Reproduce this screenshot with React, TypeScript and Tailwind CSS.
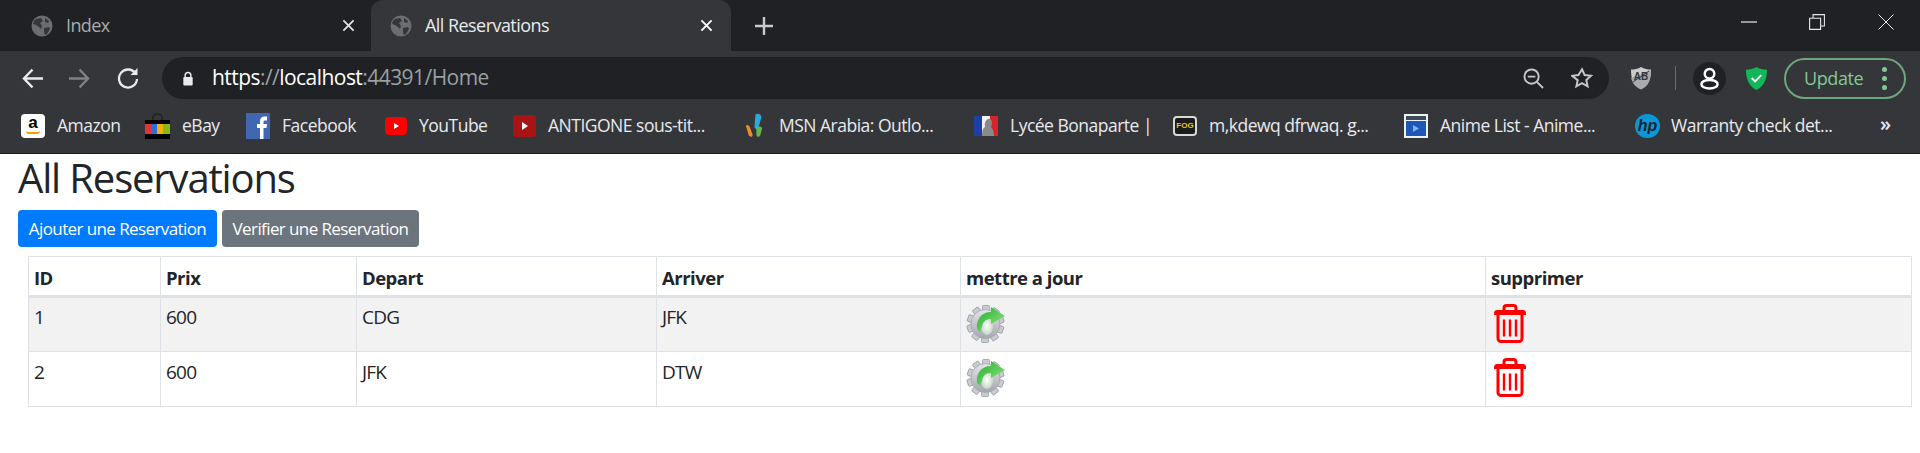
import React from "react";

const FONT = "font-['Open_Sans','Noto_Sans',sans-serif]";

function Globe({ cls }: { cls: string }) {
  return (
    <svg viewBox="0 0 22 22" className={cls}>
      <circle cx="11" cy="11" r="10.5" fill="#6b6d71" />
      <path d="M5 4l5-1 2 3-3 2 2 3-1 3-2-2-3-2-3-1 1-3zM13 13l5-1 1 2-3 5-2 1-1-3zM14 3l4 3-1 2-3-1z" fill="#35363a" />
    </svg>
  );
}

function X({ cls }: { cls: string }) {
  return (
    <svg viewBox="0 0 14 14" className={cls} fill="none" stroke="currentColor" strokeWidth="2">
      <path d="M1.5 1.5l11 11M12.5 1.5l-11 11" />
    </svg>
  );
}

function Tabs() {
  return (
    <div className="flex h-[51px] bg-[#202124] shrink-0">
      <div className="w-[371px] flex items-center pl-[31px] text-[#9aa0a6]">
        <Globe cls="w-[22px] h-[26px]" />
        <span className="ml-[13px] text-[18px] tracking-[-0.6px] text-[#a8abaf]">Index</span>
        <X cls="ml-auto mr-[16px] w-[13px] h-[13px] text-[#e0e0e0]" />
      </div>
      <div className="w-[360px] bg-[#35363a] rounded-t-[12px] flex items-center pl-[19px]">
        <Globe cls="w-[22px] h-[26px]" />
        <span className="ml-[13px] text-[18px] tracking-[-0.55px] text-[#e8eaed]">All Reservations</span>
        <X cls="ml-auto mr-[18px] w-[13px] h-[13px] text-white" />
      </div>
      <div className="ml-[24px] flex items-center">
        <svg viewBox="0 0 18 18" className="w-[18px] h-[22px]" fill="none" stroke="#c8cacd" strokeWidth="2.4">
          <path d="M9 0v18M0 9h18" />
        </svg>
      </div>
      <div className="ml-auto flex items-center h-[44px]">
        <svg viewBox="0 0 16 2" className="w-[16px] h-[2px]"><path d="M0 1h16" stroke="#e8e8e8" strokeWidth="1.2" /></svg>
        <svg viewBox="0 0 16 16" className="ml-[52px] w-[16px] h-[16px]" fill="none" stroke="#e8e8e8" strokeWidth="1.1">
          <path d="M.6 4.2h11v11.2H.6zM4 4V.6h11.4V12H12" />
        </svg>
        <svg viewBox="0 0 16 16" className="ml-[53px] mr-[26px] w-[16px] h-[16px]" fill="none" stroke="#e8e8e8" strokeWidth="1">
          <path d="M.5.5l15 15M15.5.5l-15 15" />
        </svg>
      </div>
    </div>
  );
}

function Toolbar() {
  return (
    <div className="flex items-center h-[54px] bg-[#35363a] shrink-0 relative">
      <svg viewBox="0 0 20 20" className="ml-[22px] w-[21px] h-[21px]" fill="none" stroke="#e8eaed" strokeWidth="2.2">
        <path d="M20 10H2M10 1.5L1.8 10l8.2 8.5" />
      </svg>
      <svg viewBox="0 0 20 20" className="ml-[26px] w-[21px] h-[21px]" fill="none" stroke="#7f8184" strokeWidth="2.2">
        <path d="M0 10h18M10 1.5l8.2 8.5-8.2 8.5" />
      </svg>
      <svg viewBox="0 0 22 22" className="ml-[27px] w-[22px] h-[22px]" fill="none" stroke="#e8eaed" strokeWidth="2.3">
        <path d="M18.5 6.5A9 9 0 1 0 20 12" />
        <path d="M20.5 1v7h-7z" fill="#e8eaed" stroke="none" />
      </svg>
      <div className="ml-[23px] w-[1447px] h-[42px] rounded-full bg-[#202124] flex items-center">
        <svg viewBox="0 0 12 16" className="ml-[20px] w-[12px] h-[15px]">
          <path d="M3 7V4.5a3 3 0 0 1 6 0V7" fill="none" stroke="#e8eaed" strokeWidth="1.6" />
          <rect x="1" y="6.5" width="10" height="9" rx="1.2" fill="#e8eaed" />
        </svg>
        <span className="ml-[18px] text-[21px] tracking-[-0.55px] whitespace-nowrap text-[#9aa0a6]">
          <span className="text-white">https</span>://<span className="text-white">localhost</span>:44391/Home
        </span>
        <svg viewBox="0 0 22 22" className="ml-auto w-[21px] h-[21px]" fill="none" stroke="#c4c6c9" strokeWidth="2">
          <circle cx="9" cy="9" r="7.5" />
          <path d="M5 9h8M14.5 14.5l6.5 6.5" />
        </svg>
        <svg viewBox="0 0 24 24" className="ml-[27px] mr-[16px] w-[22px] h-[22px]" fill="none" stroke="#c4c6c9" strokeWidth="2.2">
          <path d="M12 2.5l2.9 6.3 6.9.8-5.1 4.7 1.4 6.8-6.1-3.4-6.1 3.4 1.4-6.8L1.200 9.600l6.900-.8z" />
        </svg>
      </div>
      <svg viewBox="0 0 24 24" className="ml-[20px] w-[24px] h-[26px]">
        <path d="M12 1c3 2 7 2.500 10 2.500 0 9-2 16-10 19.500C4 19.500 2 12.500 2 3.500 5 3.500 9 3 12 1z" fill="#c9cbce" />
        <path d="M2 12l20-8v0c0 9-2 16-10 19.500C6 21 3.500 17 2 12z" fill="#a9abae" />
        <text x="12" y="14" textAnchor="middle" fontSize="10" fontWeight="700" fill="#35363a" fontFamily="'Liberation Sans',sans-serif">AB</text>
        <path d="M4 16L20 5" stroke="#35363a" strokeWidth="1" />
      </svg>
      <div className="ml-[22px] w-px h-[24px] bg-[#6a6c70]" />
      <div className="ml-[17px] w-[33px] h-[33px] rounded-full bg-[#202124] flex items-center justify-center">
        <svg viewBox="0 0 22 24" className="w-[21px] h-[23px]" fill="none" stroke="#fff" strokeWidth="2.6">
          <circle cx="11" cy="7" r="5" />
          <ellipse cx="11" cy="18" rx="8.500" ry="4.500" />
        </svg>
      </div>
      <svg viewBox="0 0 24 26" className="ml-[19px] w-[23px] h-[25px]">
        <path d="M12 1c3 1.800 7 2.800 11 2.800C23 13 20 21 12 25 4 21 1 13 1 3.800 5 3.800 9 2.800 12 1z" fill="#12b757" />
        <path d="M7 12.500l3.500 3.500L17 9.500" fill="none" stroke="#fff" strokeWidth="2" />
      </svg>
      <div className="ml-[16px] w-[122px] h-[41px] rounded-full border-2 border-[#6ea67d] flex items-center pl-[18px] text-[#81c995]">
        <span className="text-[18px] tracking-[-0.4px]">Update</span>
        <span className="ml-auto mr-[17px] flex flex-col gap-[4px]">
          <span className="w-[5px] h-[5px] rounded-full bg-[#81c995]" />
          <span className="w-[5px] h-[5px] rounded-full bg-[#81c995]" />
          <span className="w-[5px] h-[5px] rounded-full bg-[#81c995]" />
        </span>
      </div>
    </div>
  );
}

function Bookmark({ icon, text, w, ml, iconW }: { icon: React.ReactNode; text: string; w: string; ml: string; iconW: string }) {
  return (
    <div className={`flex items-center ${ml}`}>
      <div className={`${iconW} h-[26px] flex items-center justify-center shrink-0`}>{icon}</div>
      <span className={`${w} whitespace-nowrap text-[17.5px] tracking-[-0.5px] text-[#e8eaed]`}>{text}</span>
    </div>
  );
}

function BookmarksBar() {
  return (
    <div className="flex items-center h-[49px] pb-[7px] bg-[#35363a] border-b border-[#1c1c1e] shrink-0">
      <Bookmark ml="ml-[21px]" iconW="w-[36px]" w="w-[65px]" text="Amazon" icon={
        <div className="mr-[12px] w-[24px] h-[24px] bg-white rounded-[4px] flex flex-col items-center text-black font-bold text-[17px] leading-[17px] font-['Liberation_Sans',sans-serif]">a<div className="w-[14px] h-[3px] border-b-2 border-[#f90] rounded-b-full" /></div>
      } />
      <Bookmark ml="ml-[23px]" iconW="w-[37px]" w="w-[40px]" text="eBay" icon={
        <svg viewBox="0 0 25 26" className="w-[25px] h-[26px] mr-[12px]">
          <path d="M8 8V4a4.500 3 0 0 1 9 0v4" fill="none" stroke="#222" strokeWidth="1.500" />
          <rect y="7" width="25" height="19" fill="#000" />
          <rect y="11" width="6" height="10" fill="#e53238" /><rect x="6" y="11" width="6" height="10" fill="#2f6fd3" /><rect x="12" y="11" width="6" height="10" fill="#f5af02" /><rect x="18" y="11" width="7" height="10" fill="#86b817" />
        </svg>
      } />
      <Bookmark ml="ml-[24px]" iconW="w-[36px]" w="w-[76px]" text="Facebook" icon={
        <svg viewBox="0 0 24 26" className="mr-[12px] w-[24px] h-[26px]">
          <rect width="24" height="26" fill="#4267b2" />
          <path d="M14 26V15h-3v-4h3V8c0-3 2-4.500 4.500-4.500H21v4h-2c-1 0-1.500.5-1.500 1.500v2H21l-.5 4h-3v11z" fill="#fff" />
        </svg>
      } />
      <Bookmark ml="ml-[27px]" iconW="w-[34px]" w="w-[68px]" text="YouTube" icon={
        <svg viewBox="0 0 22 18" className="w-[22px] h-[18px] mr-[12px]">
          <rect width="22" height="18" rx="4" fill="#f00" /><path d="M9 6l5 3-5 3z" fill="#fff" />
        </svg>
      } />
      <Bookmark ml="ml-[26px]" iconW="w-[35px]" w="w-[165px]" text="ANTIGONE sous-tit..." icon={
        <svg viewBox="0 0 23 22" className="w-[23px] h-[22px] mr-[12px]">
          <rect width="23" height="22" rx="3" fill="#a81414" /><path d="M9 7l6 4-6 4z" fill="#fff" />
        </svg>
      } />
      <Bookmark ml="ml-[32px]" iconW="w-[34px]" w="w-[161px]" text="MSN Arabia: Outlo..." icon={
        <svg viewBox="0 0 20 26" className="w-[19px] h-[26px] mr-[15px]">
          <path d="M11 1c3-2 7 0 6 4l-3 10c-1 2-4 1-4-1z" fill="#2aa9d8" />
          <path d="M1 13c1-2 3-1 4 1l3 8c0 3-2 3-4 1z" fill="#f08a2c" />
          <path d="M12 15c2-2 6-2 6 1l-2 7c-1 2-4 2-4-1z" fill="#66b64a" />
        </svg>
      } />
      <Bookmark ml="ml-[34px]" iconW="w-[36px]" w="w-[139px]" text="Lycée Bonaparte |" icon={
        <svg viewBox="0 0 24 20" className="w-[24px] h-[20px] mr-[12px]">
          <rect width="8" height="20" fill="#1d3fa8" /><rect x="8" width="8" height="20" fill="#f2f2f2" /><rect x="16" width="8" height="20" fill="#d5242c" />
          <path d="M8 20c0-6 1-8 3-9-1-5 2-9 5-8 3 2 2 6 1 8 2 2 3 5 3 9z" fill="#8a8a8a" />
        </svg>
      } />
      <Bookmark ml="ml-[24px]" iconW="w-[36px]" w="w-[165px]" text="m,kdewq dfrwaq. g..." icon={
        <div className="mr-[12px] w-[24px] h-[20px] rounded-[4px] bg-[#1b1b1b] border-2 border-[#d8d8d8] flex items-center justify-center text-[#f5c518] text-[8px] font-bold leading-none font-['Liberation_Sans',sans-serif]">FOG</div>
      } />
      <Bookmark ml="ml-[30px]" iconW="w-[36px]" w="w-[164px]" text="Anime List - Anime..." icon={
        <svg viewBox="0 0 24 24" className="w-[24px] h-[24px] mr-[12px]">
          <rect width="24" height="24" fill="#eef1f4" /><rect x="2" y="2" width="20" height="4" fill="#40495a" /><rect x="2" y="7" width="20" height="15" fill="#1f57b8" /><path d="M9 11l6 3.500-6 3.500z" fill="#7fb2ee" />
        </svg>
      } />
      <Bookmark ml="ml-[31px]" iconW="w-[36px]" w="w-[166px]" text="Warranty check det..." icon={
        <div className="mr-[11px] w-[25px] h-[24px] rounded-full bg-[#0d96d6] flex items-center justify-center text-[#16242f] italic font-bold text-[16px] leading-none font-['Liberation_Sans',sans-serif]">hp</div>
      } />
      <span className="ml-[43px] text-[20px] font-semibold leading-none text-[#e8eaed] -mt-[4px]">»</span>
    </div>
  );
}

function Gear() {
  const teeth = [0, 36, 72, 108, 144, 180, 216, 252, 288, 324];
  return (
    <svg viewBox="0 0 40 38" className="w-[40px] h-[38px] block">
      <defs>
        <linearGradient id="g1" x1="0" y1="0" x2="0" y2="1"><stop offset="0" stopColor="#e4e5e9" /><stop offset="1" stopColor="#a4a6ae" /></linearGradient>
        <linearGradient id="g2" x1="0" y1="0" x2="1" y2="1"><stop offset="0" stopColor="#1fae2a" /><stop offset="1" stopColor="#9ce68a" /></linearGradient>
        <radialGradient id="g3"><stop offset="0" stopColor="#ffffff" /><stop offset="1" stopColor="#c8d8c8" /></radialGradient>
      </defs>
      {teeth.map((a) => (
        <rect key={a} x="16.500" y="0.500" width="7" height="6" rx="1" fill="#c9cbd1" stroke="#9a9ca4" strokeWidth="0.8" transform={`rotate(${a} 19.500 19)`} />
      ))}
      <circle cx="19.500" cy="19" r="14.500" fill="url(#g1)" stroke="#a2a4ac" strokeWidth="0.8" />
      <ellipse cx="21" cy="21" rx="6" ry="9" fill="url(#g3)" />
      <path d="M11 24c-1-9 4-17 14-17V2l14 9-14 8v-5c-6 0-8 3-9 8l-2 5z" fill="url(#g2)" />
    </svg>
  );
}

function Trash() {
  return (
    <svg viewBox="0 0 34 39" className="w-[34px] h-[39px] block" fill="none" stroke="#f00">
      <path d="M11 6V4a2.500 2.500 0 0 1 2.500-2.500h7A2.500 2.500 0 0 1 23 4v2" strokeWidth="3" />
      <path d="M1 10c0-3 1-4 3-4h26c2 0 3 1 3 4v1H1z" fill="#f00" stroke="none" />
      <path d="M5 11v23.500A3 3 0 0 0 8 37.500h18a3 3 0 0 0 3-3V11" strokeWidth="3" />
      <path d="M11 15.500v17M17 15.500v17M23 15.500v17" strokeWidth="2.400" />
    </svg>
  );
}

function Row({ id, from, to, stripe, pt }: { id: string; from: string; to: string; stripe: boolean; pt: string }) {
  const td = `border border-[#dee2e6] px-[5px] ${pt} align-top text-[19px] leading-[27px] h-[55px] font-normal tracking-[-0.8px] text-[#212529]`;
  return (
    <tr className={stripe ? "bg-[#f2f2f2]" : ""}>
      <td className={td}>{id}</td>
      <td className={td}>{"600"}</td>
      <td className={td}>{from}</td>
      <td className={td}>{to}</td>
      <td className={`${td} !pt-[7px]`}><Gear /></td>
      <td className={`${td} !pt-[6px] pl-[7px]`}><Trash /></td>
    </tr>
  );
}

export default function App() {
  const th = "border border-[#dee2e6] border-b-[3px] pl-[5px] pt-[2px] text-left align-middle text-[18.5px] leading-[27px] font-bold tracking-[-0.5px] text-[#212529]";
  return (
    <div className={`${FONT} w-[1920px] h-[453px] flex flex-col overflow-hidden bg-white`}>
      <Tabs />
      <Toolbar />
      <BookmarksBar />
      <div className="pl-[18px] pr-[9px]">
        <h1 className="text-[40px] leading-[48px] font-medium tracking-[-1.15px] text-[#212529]">All Reservations</h1>
        <div className="mt-[8px] flex gap-[5px]">
          <button className="w-[199px] h-[37px] rounded-[4px] bg-[#007bff] text-white text-[17px] tracking-[-0.6px]">Ajouter une Reservation</button>
          <button className="w-[197px] h-[37px] rounded-[4px] bg-[#6c757d] text-white text-[17px] tracking-[-0.6px]">Verifier une Reservation</button>
        </div>
        <div className="mt-[9px] ml-[10px]">
          <table className="table-fixed w-[1883px] border-collapse">
            <colgroup>
              <col className="w-[132px]" />
              <col className="w-[196px]" />
              <col className="w-[300px]" />
              <col className="w-[304px]" />
              <col className="w-[525px]" />
              <col className="w-[426px]" />
            </colgroup>
            <thead>
              <tr className="h-[40px]">
                <th className={th}>ID</th>
                <th className={th}>Prix</th>
                <th className={th}>Depart</th>
                <th className={th}>Arriver</th>
                <th className={th}>mettre a jour</th>
                <th className={th}>supprimer</th>
              </tr>
            </thead>
            <tbody>
              <Row id="1" from="CDG" to="JFK" stripe pt="pt-[6px]" />
              <Row id="2" from="JFK" to="DTW" stripe={false} pt="pt-[7px]" />
            </tbody>
          </table>
        </div>
      </div>
    </div>
  );
}
